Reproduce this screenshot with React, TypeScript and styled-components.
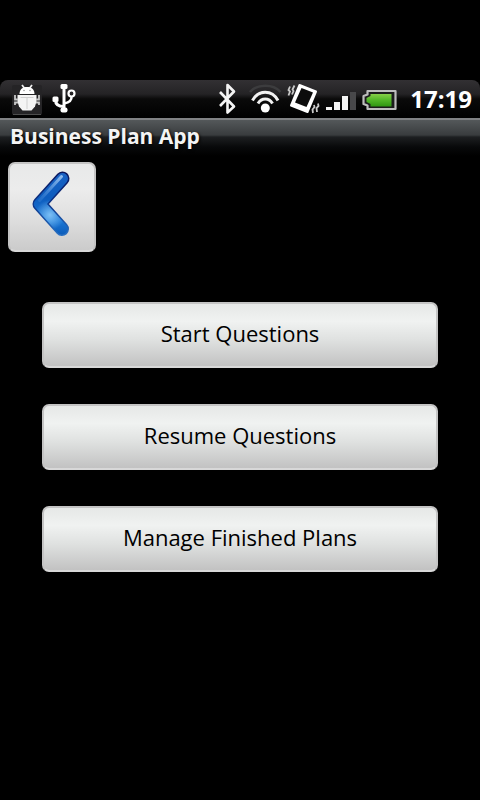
import React from "react";
import styled, { createGlobalStyle } from "styled-components";

const GlobalStyle = createGlobalStyle`
  *, *::before, *::after { box-sizing: border-box; }
  body {
    margin: 0;
    background: #000;
    font-family: "Open Sans", "Noto Sans", sans-serif;
  }
`;

const Screen = styled.div`
  display: flex;
  flex-direction: column;
  min-height: 100vh;
  padding: 80px 0;
  background: #000;
`;

const StatusBar = styled.header`
  display: flex;
  align-items: center;
  justify-content: space-between;
  height: 38px;
  padding: 0 8px 0 12px;
  border-radius: 8px 8px 0 0;
  background: linear-gradient(#323033 0, #242325 14px, #0a0a0a 19px, #000 100%);
`;

const IconGroup = styled.div<{ $gap: number }>`
  display: flex;
  align-items: center;
  gap: ${(p) => p.$gap}px;
`;

const StatusIcon = styled.svg`
  display: block;
  flex: none;
`;

const Clock = styled.time`
  margin-left: 6px;
  color: #fff;
  font-size: 24px;
  font-weight: 700;
  line-height: 38px;
`;

const TitleBar = styled.div`
  height: 38px;
  padding: 0 10px;
  border-top: 2px solid #808284;
  background: linear-gradient(#54585a 0, #393c3e 15px, #1d1f21 17px, #08090a 27px, #000 100%);
`;

const Title = styled.h1`
  margin: 0;
  color: #f4f4f4;
  font-size: 21px;
  font-weight: 700;
  line-height: 32px;
  text-shadow: 1px 1px 3px #000;
`;

const Content = styled.main`
  display: flex;
  flex-direction: column;
  align-items: flex-start;
  gap: 50px;
  padding: 6px 8px;
`;

const Button = styled.button`
  display: block;
  padding: 0;
  border: 2px solid #c4c4c4;
  border-bottom-color: #d8d8d8;
  border-radius: 7px;
  background: linear-gradient(#e6e8e7 0, #f0f2f1 28%, #dfe1e0 58%, #c2c2c2 100%);
  color: #000;
  font-family: inherit;
  font-size: 22px;
  line-height: 28px;
  cursor: pointer;
`;

const BackButton = styled(Button)`
  width: 88px;
  height: 90px;
  background: linear-gradient(#e8e9e9 0, #ececec 30%, #dedede 65%, #cbcbcb 100%);
`;

const Menu = styled.nav`
  display: flex;
  flex-direction: column;
  align-self: stretch;
  gap: 36px;
  padding: 0 34px;
`;

const MenuButton = styled(Button)`
  width: 100%;
  height: 66px;
  padding-bottom: 4px;
`;

const RobotIcon = () => (
  <StatusIcon width="30" height="38" viewBox="0 0 30 38" role="img" aria-label="Debugging">
    <rect x="0" y="5" width="30" height="30" rx="2" fill="#252426" />
    <path d="M1 34.5h28" stroke="#4c4c4c" />
    <path d="M10 5l3 4M20 5l-3 4" stroke="#eee" strokeWidth="1.8" />
    <path d="M7.500 14c0-4.500 3-7 7.500-7s7.500 2.500 7.500 7z" fill="#fff" />
    <circle cx="12" cy="10.500" r="0.800" fill="#999" />
    <circle cx="18" cy="10.500" r="0.800" fill="#999" />
    <path d="M5.500 15h19v6.500l-1.500 5-3.500 4h-9l-3.500-4-1.500-5z" fill="#f4f4f4" />
    <path d="M15 17v12M8.500 17.500h13" stroke="#d0d0d0" />
    <path
      d="M3 15v4.500h3M3 25v-2.500h3M27 15v4.500h-3M27 25v-2.500h-3"
      fill="none"
      stroke="#c8c8c8"
      strokeWidth="1.800"
    />
  </StatusIcon>
);

const UsbIcon = () => (
  <StatusIcon width="26" height="38" viewBox="0 0 26 38" role="img" aria-label="USB connected">
    <g fill="none" stroke="#fff" strokeWidth="3">
      <path d="M12 7v23" />
      <path d="M3.500 20c0 4 3 6.500 8.500 6.500" />
      <path d="M12 23.500c5-1 8-3 7.500-7" strokeWidth="2.500" />
      <circle cx="19.500" cy="13.500" r="3" strokeWidth="2.200" />
    </g>
    <rect x="8.500" y="4" width="7" height="5" rx="1.500" fill="#fff" />
    <rect x="8.500" y="27.500" width="7" height="5" rx="2" fill="#fff" />
    <rect x="0.500" y="16.500" width="6" height="5.500" rx="1.500" fill="#fff" />
  </StatusIcon>
);

const BluetoothIcon = () => (
  <StatusIcon width="24" height="38" viewBox="0 0 24 38" role="img" aria-label="Bluetooth">
    <path
      d="M1 12L15 26.500 8.500 32.500V5L15 11.500 1 26"
      fill="none"
      stroke="#f4f4f4"
      strokeWidth="2.600"
      strokeLinejoin="round"
    />
  </StatusIcon>
);

const WifiIcon = () => (
  <StatusIcon width="32" height="38" viewBox="0 0 32 38" role="img" aria-label="Wi-Fi">
    <g fill="none" stroke="#f2f2f2" strokeWidth="3">
      <path d="M1 12C8 3.500 24.500 3.500 31.500 12" stroke="#3c3c3e" strokeWidth="2.500" />
      <path d="M3.500 20.500C9.500 9.500 23 9.500 29 20.500" />
      <path d="M9 23.500c3.500-6 11-6 14.500 0" />
    </g>
    <circle cx="16.300" cy="28" r="4.500" fill="#fff" />
  </StatusIcon>
);

const VibrateIcon = () => (
  <StatusIcon width="33" height="38" viewBox="0 0 33 38" role="img" aria-label="Vibrate mode">
    <path
      d="M12.500 5L29 11.500 20.500 32 4 25.500Z"
      fill="#fff"
      stroke="#fff"
      strokeWidth="2"
      strokeLinejoin="round"
    />
    <path d="M14.500 8L26 12.500 19.500 27 8 22.500Z" fill="#0c0c0c" />
    <path
      d="M3 6.500l-1.500 3.500 1.500 1.500-1.500 4M7.500 5.500l-2 4 1 1.500-1.500 3.500M27 25l.5 2-2 2.500.5 3.500M31 23.500l.5 2.500-2 2 .5 4"
      fill="none"
      stroke="#c8c8c8"
      strokeWidth="1.800"
    />
  </StatusIcon>
);

const SignalIcon = () => (
  <StatusIcon width="30" height="38" viewBox="0 0 30 38" role="img" aria-label="Signal strength">
    <g fill="#f4f4f4">
      <rect x="0" y="27" width="6" height="3" />
      <rect x="8" y="22" width="6" height="8" />
      <rect x="16" y="16" width="6" height="14" />
    </g>
    <rect x="24" y="12" width="6" height="18" fill="#48484a" />
  </StatusIcon>
);

const BatteryIcon = () => (
  <StatusIcon width="36" height="38" viewBox="0 0 36 38" role="img" aria-label="Battery">
    <defs>
      <linearGradient id="charge" x1="0" y1="0" x2="0" y2="1">
        <stop offset="0" stopColor="#86cf48" />
        <stop offset="0.450" stopColor="#55b82a" />
        <stop offset="1" stopColor="#2f9612" />
      </linearGradient>
    </defs>
    <path
      d="M5.500 11H33.500V29H5.500V25.500L1.500 24V16L5.500 14.500Z"
      fill="#1c1c1c"
      stroke="#bdbdbd"
      strokeWidth="2.200"
      strokeLinejoin="round"
    />
    <path d="M8.500 14H29.500V26.500H8.500V24L4.500 22V18L8.500 16Z" fill="url(#charge)" />
  </StatusIcon>
);

const BackIcon = () => (
  <svg width="84" height="86" viewBox="0 0 84 86" aria-hidden="true">
    <defs>
      <linearGradient id="arrow" gradientUnits="userSpaceOnUse" x1="0" y1="8" x2="0" y2="72">
        <stop offset="0" stopColor="#1a62c4" />
        <stop offset="0.400" stopColor="#0d5cbe" />
        <stop offset="0.750" stopColor="#1c78d6" />
        <stop offset="1" stopColor="#0a5ab8" />
      </linearGradient>
      <linearGradient id="rim" gradientUnits="userSpaceOnUse" x1="0" y1="8" x2="0" y2="72">
        <stop offset="0" stopColor="#0a155c" />
        <stop offset="0.500" stopColor="#0c3488" />
        <stop offset="1" stopColor="#2a72c4" />
      </linearGradient>
      <radialGradient id="glow" gradientUnits="userSpaceOnUse" cx="40" cy="51" r="15">
        <stop offset="0" stopColor="#7cc0f6" />
        <stop offset="1" stopColor="#7cc0f6" stopOpacity="0" />
      </radialGradient>
      <linearGradient id="shine" gradientUnits="userSpaceOnUse" x1="53" y1="10" x2="30" y2="36">
        <stop offset="0" stopColor="#9cc4f0" />
        <stop offset="1" stopColor="#4a8edc" stopOpacity="0.300" />
      </linearGradient>
    </defs>
    <g fill="none" strokeLinecap="round" strokeLinejoin="round">
      <path d="M52.500 14.500L29.500 40 52 65" stroke="url(#rim)" strokeWidth="14" />
      <path d="M52.500 14.500L29.500 40 52 65" stroke="url(#arrow)" strokeWidth="11" />
      <path d="M52.500 14.500L29.500 40 52 65" stroke="url(#glow)" strokeWidth="11" />
      <path d="M51.500 12.500L29.500 36.500" stroke="url(#shine)" strokeWidth="3" />
    </g>
  </svg>
);

const actions = ["Start Questions", "Resume Questions", "Manage Finished Plans"];

export default function App() {
  return (
    <>
      <GlobalStyle />
      <Screen>
        <StatusBar>
          <IconGroup $gap={10}>
            <RobotIcon />
            <UsbIcon />
          </IconGroup>
          <IconGroup $gap={6}>
            <BluetoothIcon />
            <WifiIcon />
            <VibrateIcon />
            <SignalIcon />
            <BatteryIcon />
            <Clock>17:19</Clock>
          </IconGroup>
        </StatusBar>
        <TitleBar>
          <Title>Business Plan App</Title>
        </TitleBar>
        <Content>
          <BackButton type="button" aria-label="Back">
            <BackIcon />
          </BackButton>
          <Menu>
            {actions.map((label) => (
              <MenuButton type="button" key={label}>
                {label}
              </MenuButton>
            ))}
          </Menu>
        </Content>
      </Screen>
    </>
  );
}
